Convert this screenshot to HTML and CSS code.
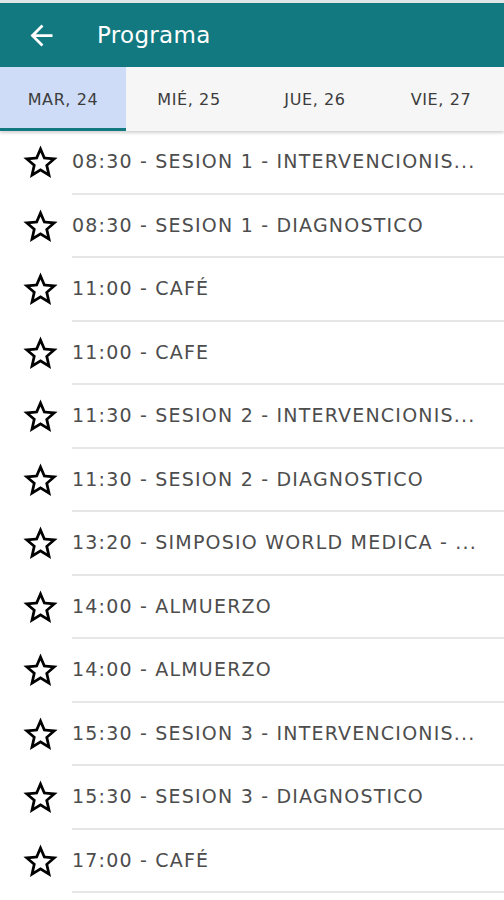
FILE: index.html
```html
<!doctype html>
<html>
<head>
<meta charset="utf-8">
<title>Programa</title>
<link rel="stylesheet" href="styles.css">
</head>
<body>
<div class="toolbar">
	<svg class="back" viewBox="0 0 24 24" width="33" height="33"><path d="M20 11H7.83l5.59-5.59L12 4l-8 8 8 8 1.41-1.41L7.83 13H20v-2z" fill="#fff"/></svg>
	<h1>Programa</h1>
</div>
<ul class="tabs">
	<li class="active">MAR, 24</li>
	<li>MIÉ, 25</li>
	<li>JUE, 26</li>
	<li>VIE, 27</li>
</ul>
<ul class="list">
	<li><svg class="star" viewBox="0 0 24 24"><path d="M22 9.24l-7.19-.62L12 2 9.19 8.63 2 9.24l5.46 4.73L5.82 21 12 17.27 18.18 21l-1.63-7.03L22 9.24zM12 15.4l-3.76 2.27 1-4.28-3.32-2.88 4.38-.38L12 6.1l1.71 4.04 4.38.38-3.32 2.88 1 4.28L12 15.4z"/></svg><span>08:30 - SESION 1 - INTERVENCIONIS...</span></li>
	<li><svg class="star" viewBox="0 0 24 24"><path d="M22 9.24l-7.19-.62L12 2 9.19 8.63 2 9.24l5.46 4.73L5.82 21 12 17.27 18.18 21l-1.63-7.03L22 9.24zM12 15.4l-3.76 2.27 1-4.28-3.32-2.88 4.38-.38L12 6.1l1.71 4.04 4.38.38-3.32 2.88 1 4.28L12 15.4z"/></svg><span>08:30 - SESION 1 - DIAGNOSTICO</span></li>
	<li><svg class="star" viewBox="0 0 24 24"><path d="M22 9.24l-7.19-.62L12 2 9.19 8.63 2 9.24l5.46 4.73L5.82 21 12 17.27 18.18 21l-1.63-7.03L22 9.24zM12 15.4l-3.76 2.27 1-4.28-3.32-2.88 4.38-.38L12 6.1l1.71 4.04 4.38.38-3.32 2.88 1 4.28L12 15.4z"/></svg><span>11:00 - CAFÉ</span></li>
	<li><svg class="star" viewBox="0 0 24 24"><path d="M22 9.24l-7.19-.62L12 2 9.19 8.63 2 9.24l5.46 4.73L5.82 21 12 17.27 18.18 21l-1.63-7.03L22 9.24zM12 15.4l-3.76 2.27 1-4.28-3.32-2.88 4.38-.38L12 6.1l1.71 4.04 4.38.38-3.32 2.88 1 4.28L12 15.4z"/></svg><span>11:00 - CAFE</span></li>
	<li><svg class="star" viewBox="0 0 24 24"><path d="M22 9.24l-7.19-.62L12 2 9.19 8.63 2 9.24l5.46 4.73L5.82 21 12 17.27 18.18 21l-1.63-7.03L22 9.24zM12 15.4l-3.76 2.27 1-4.28-3.32-2.88 4.38-.38L12 6.1l1.71 4.04 4.38.38-3.32 2.88 1 4.28L12 15.4z"/></svg><span>11:30 - SESION 2 - INTERVENCIONIS...</span></li>
	<li><svg class="star" viewBox="0 0 24 24"><path d="M22 9.24l-7.19-.62L12 2 9.19 8.63 2 9.24l5.46 4.73L5.82 21 12 17.27 18.18 21l-1.63-7.03L22 9.24zM12 15.4l-3.76 2.27 1-4.28-3.32-2.88 4.38-.38L12 6.1l1.71 4.04 4.38.38-3.32 2.88 1 4.28L12 15.4z"/></svg><span>11:30 - SESION 2 - DIAGNOSTICO</span></li>
	<li><svg class="star" viewBox="0 0 24 24"><path d="M22 9.24l-7.19-.62L12 2 9.19 8.63 2 9.24l5.46 4.73L5.82 21 12 17.27 18.18 21l-1.63-7.03L22 9.24zM12 15.4l-3.76 2.27 1-4.28-3.32-2.88 4.38-.38L12 6.1l1.71 4.04 4.38.38-3.32 2.88 1 4.28L12 15.4z"/></svg><span>13:20 - SIMPOSIO WORLD MEDICA - ...</span></li>
	<li><svg class="star" viewBox="0 0 24 24"><path d="M22 9.24l-7.19-.62L12 2 9.19 8.63 2 9.24l5.46 4.73L5.82 21 12 17.27 18.18 21l-1.63-7.03L22 9.24zM12 15.4l-3.76 2.27 1-4.28-3.32-2.88 4.38-.38L12 6.1l1.71 4.04 4.38.38-3.32 2.88 1 4.28L12 15.4z"/></svg><span>14:00 - ALMUERZO</span></li>
	<li><svg class="star" viewBox="0 0 24 24"><path d="M22 9.24l-7.19-.62L12 2 9.19 8.63 2 9.24l5.46 4.73L5.82 21 12 17.27 18.18 21l-1.63-7.03L22 9.24zM12 15.4l-3.76 2.27 1-4.28-3.32-2.88 4.38-.38L12 6.1l1.71 4.04 4.38.38-3.32 2.88 1 4.28L12 15.4z"/></svg><span>14:00 - ALMUERZO</span></li>
	<li><svg class="star" viewBox="0 0 24 24"><path d="M22 9.24l-7.19-.62L12 2 9.19 8.63 2 9.24l5.46 4.73L5.82 21 12 17.27 18.18 21l-1.63-7.03L22 9.24zM12 15.4l-3.76 2.27 1-4.28-3.32-2.88 4.38-.38L12 6.1l1.71 4.04 4.38.38-3.32 2.88 1 4.28L12 15.4z"/></svg><span>15:30 - SESION 3 - INTERVENCIONIS...</span></li>
	<li><svg class="star" viewBox="0 0 24 24"><path d="M22 9.24l-7.19-.62L12 2 9.19 8.63 2 9.24l5.46 4.73L5.82 21 12 17.27 18.18 21l-1.63-7.03L22 9.24zM12 15.4l-3.76 2.27 1-4.28-3.32-2.88 4.38-.38L12 6.1l1.71 4.04 4.38.38-3.32 2.88 1 4.28L12 15.4z"/></svg><span>15:30 - SESION 3 - DIAGNOSTICO</span></li>
	<li><svg class="star" viewBox="0 0 24 24"><path d="M22 9.24l-7.19-.62L12 2 9.19 8.63 2 9.24l5.46 4.73L5.82 21 12 17.27 18.18 21l-1.63-7.03L22 9.24zM12 15.4l-3.76 2.27 1-4.28-3.32-2.88 4.38-.38L12 6.1l1.71 4.04 4.38.38-3.32 2.88 1 4.28L12 15.4z"/></svg><span>17:00 - CAFÉ</span></li>
</ul>
</body>
</html>
```

FILE: styles.css
```css
*{ margin: 0; padding: 0; list-style: none; box-sizing: border-box;}
body{ font-family: "DejaVu Sans", "Open Sans", sans-serif; background: #fff; border-top: 3px solid #dfe6e6; overflow: hidden;}
.toolbar{ height: 64px; background: #127980; display: flex; align-items: center; padding-left: 25px;}
.toolbar .back{ display: block;}
.toolbar h1{ margin-left: 39px; color: #fff; font-size: 23px; font-weight: 400; letter-spacing: 0.3px;}
.tabs{ display: flex; height: 64px; background: #f6f6f6; box-shadow: 0 2px 3px rgba(0,0,0,0.18); position: relative;}
.tabs li{ flex: 1; display: flex; align-items: center; justify-content: center; font-size: 16px; color: #3c3c3c; letter-spacing: 0.6px; border-bottom: 3px solid transparent; padding-top: 3px;}
.tabs li.active{ background: #cfdcf7; border-bottom-color: #127980;}
.list li{ display: flex; align-items: center; height: 63.5px;}
.list .star{ width: 41px; height: 41px; margin: 0 11px 0 20px; flex: none;}
.list span{ flex: 1; height: 100%; line-height: 61px; border-bottom: 2px solid #e6e6e6; font-size: 19px; color: #4d4d4d; letter-spacing: 1.2px; white-space: nowrap; overflow: hidden; text-overflow: ellipsis; padding-right: 20px; min-width: 0;}
```
